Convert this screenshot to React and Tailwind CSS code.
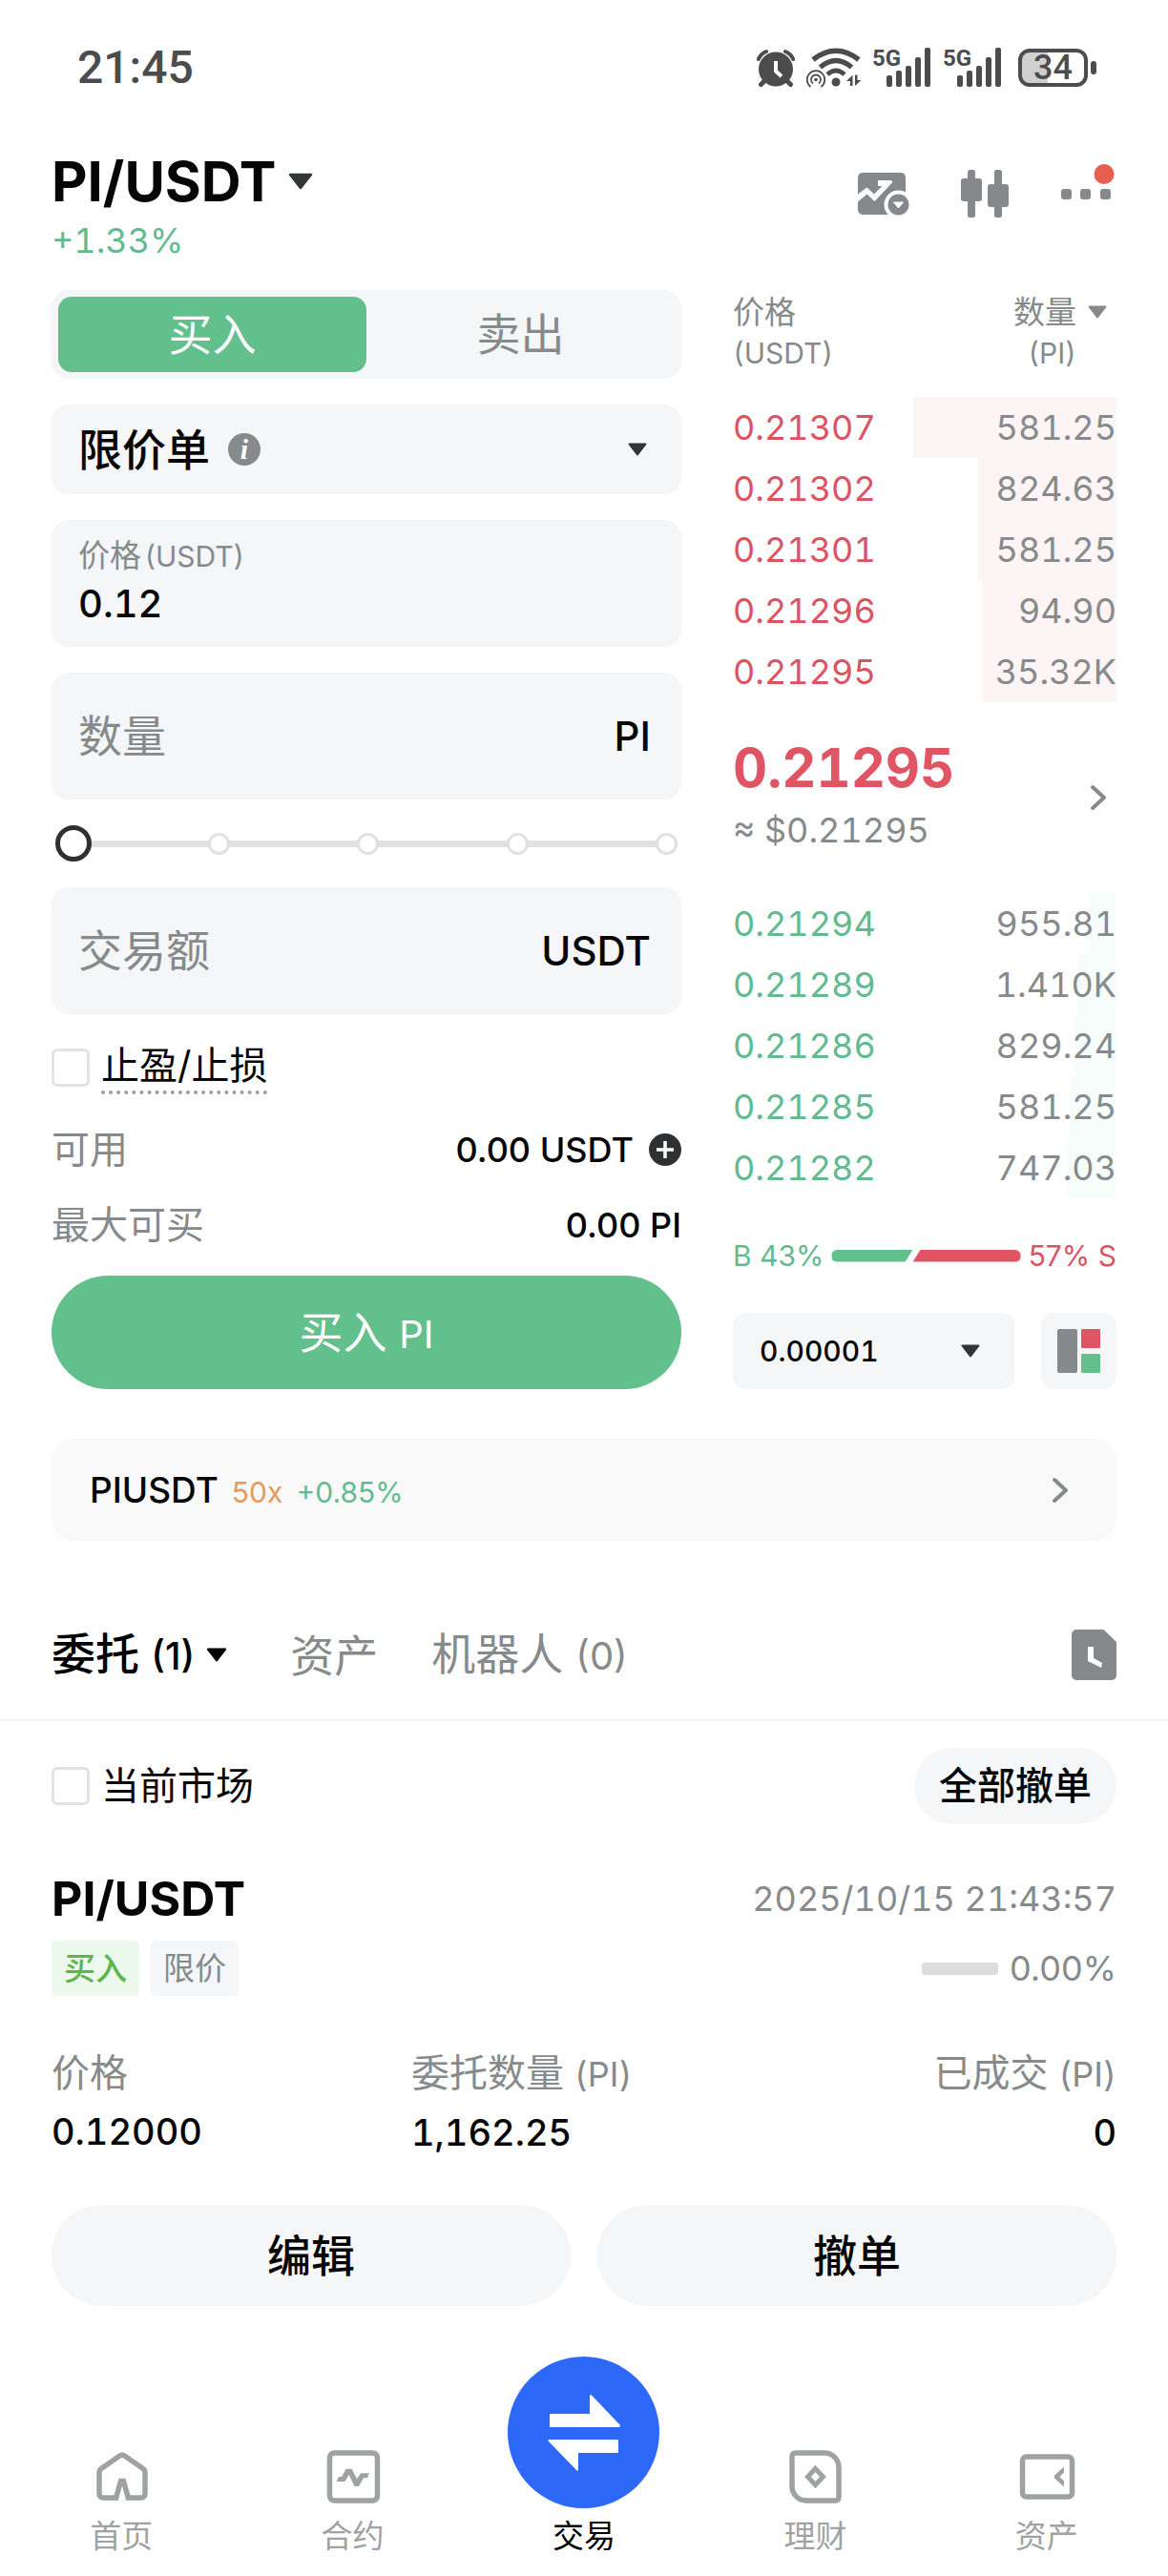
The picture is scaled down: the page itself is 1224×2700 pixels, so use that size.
import { useState } from "react";

const asks = [
  { price: "0.21307", amount: "581.25", depth: 53 },
  { price: "0.21302", amount: "824.63", depth: 36 },
  { price: "0.21301", amount: "581.25", depth: 36 },
  { price: "0.21296", amount: "94.90", depth: 35 },
  { price: "0.21295", amount: "35.32K", depth: 35 },
];

const bids = [
  { price: "0.21294", amount: "955.81", depth: 7 },
  { price: "0.21289", amount: "1.410K", depth: 10 },
  { price: "0.21286", amount: "829.24", depth: 11 },
  { price: "0.21285", amount: "581.25", depth: 12 },
  { price: "0.21282", amount: "747.03", depth: 13 },
];

const ratio = { buy: 43, sell: 57 };

const Caret = ({ className = "" }) => (
  <svg viewBox="0 0 20 14" className={`shrink-0 ${className}`} fill="currentColor" stroke="currentColor" strokeWidth="2" strokeLinejoin="round">
    <path d="M1.5 1.5h17L10 12.5z" />
  </svg>
);

const Chevron = () => (
  <svg viewBox="0 0 18 28" className="h-7 w-[18px] shrink-0 text-[#878a8b]" fill="none" stroke="currentColor" strokeWidth="4" strokeLinecap="round" strokeLinejoin="round">
    <path d="M3 3l12 11L3 25" />
  </svg>
);

/* STATUS BAR */
const Signal = () => (
  <svg viewBox="0 0 62 42" className="h-[42px] w-[62px] overflow-visible" fill="currentColor">
    <text x="-1" y="19" fontSize="24" fontWeight="700" fontFamily="Roboto, sans-serif">5G</text>
    <rect x="14" y="29" width="6" height="12" rx="2" />
    <rect x="24" y="24" width="6" height="17" rx="2" />
    <rect x="34" y="19" width="6" height="22" rx="2" />
    <rect x="44" y="10" width="6" height="31" rx="2" />
    <rect x="54" y="0" width="6" height="41" rx="2" />
  </svg>
);

const StatusBar = () => (
  <div className="flex items-center justify-between pt-[42px] pr-[75px] pl-[81px] text-[#4c4c4c]">
    <span className="font-['Roboto',sans-serif] text-[48px] leading-[58px] font-medium">21:45</span>

    <div className="flex items-center gap-3">
      <svg viewBox="0 0 40 41" className="h-[41px] w-10" fill="none" stroke="currentColor" strokeLinecap="round">
        <circle cx="20" cy="21.5" r="18" fill="currentColor" stroke="none" />
        <path d="M1.8 11A15 15 0 0 1 10 3" strokeWidth="4" />
        <path d="M38.2 11A15 15 0 0 0 30 3" strokeWidth="4" />
        <path d="M4.5 37.5l5-5M35.5 37.5l-5-5" strokeWidth="5" />
        <path d="M20 13v10.5l6 5.5" stroke="#fff" strokeWidth="4" strokeLinecap="butt" />
      </svg>

      <svg viewBox="0 0 58 42" className="h-[42px] w-[58px]" fill="none" stroke="currentColor">
        <path d="M7 12.5Q31-6 55 12.5" strokeWidth="5.5" />
        <path d="M14.5 20.5Q31 6.5 47.5 20.5" strokeWidth="5.5" />
        <path d="M22 28Q31 20 40 28" strokeWidth="5" />
        <circle cx="31" cy="36" r="4.5" fill="currentColor" stroke="none" />
        <circle cx="10" cy="33.5" r="1.8" fill="currentColor" stroke="none" />
        <path d="M7 37.5a5 5 0 1 1 6 0M4.5 41a9.3 9.3 0 1 1 11 0" strokeWidth="1.8" />
        <path d="M42 35l6.5-6.5V40H46v-5zM51 28.5h2.5V34h4L51 40z" fill="currentColor" stroke="none" />
      </svg>

      <Signal />
      <Signal />

      <div className="ml-1 flex items-center gap-[3px]">
        <div className="grid h-10 w-[73px] place-items-center rounded-[12px] border-4 border-current bg-linear-to-r from-[#cfcfcf] from-42% to-white to-42%">
          <span className="font-['Roboto',sans-serif] text-[36px] leading-8 font-medium">34</span>
        </div>
        <div className="h-[14px] w-[6px] rounded-[3px] bg-current" />
      </div>
    </div>
  </div>
);

/* PAIR HEADER */
const PairHeader = () => (
  <header className="flex items-start justify-between px-[54px] pt-[61px]">
    <div>
      <button type="button" className="flex items-center gap-3 text-[58px] leading-[58px] font-bold">
        PI/USDT
        <Caret className="h-[18px] w-[26px] text-[#333537]" />
      </button>
      <p className="mt-[13px] text-[36px] leading-10 text-[#62bb90] tabular-nums">+1.33%</p>
    </div>

    <div className="flex gap-[47px] pt-[9px] text-[#85898b]">
      <button type="button" aria-label="K线图">
        <svg viewBox="0 0 60 60" className="size-[60px]" fill="currentColor">
          <rect x="3" y="11" width="50" height="44" rx="5" />
          <path d="M3 33.5l9.5-7 7.5 7 8.5-8.500H24v-6h13q3 .5 2 2.500L20.500 41l-8-7.500L3 41.500z" fill="#fff" />
          <circle cx="45.5" cy="44.5" r="15" fill="#fff" />
          <circle cx="45.5" cy="44.5" r="11" />
          <path d="M40.5 42h10l-5 6z" fill="#fff" stroke="#fff" strokeLinejoin="round" />
        </svg>
      </button>
      <button type="button" aria-label="蜡烛图">
        <svg viewBox="0 0 60 60" className="size-[60px]" fill="currentColor">
          <rect x="11" y="8" width="8" height="50" rx="2.5" />
          <rect x="4" y="17" width="22" height="24" rx="3" />
          <rect x="39" y="8" width="8" height="50" rx="2.5" />
          <rect x="32" y="23" width="22" height="24" rx="3" />
        </svg>
      </button>
      <button type="button" aria-label="更多">
        <svg viewBox="0 0 60 60" className="size-[60px]" fill="currentColor">
          <rect x="2" y="28" width="11" height="11" rx="3" />
          <rect x="22" y="28" width="11" height="11" rx="3" />
          <rect x="43" y="28" width="11" height="11" rx="3" />
          <circle cx="47" cy="12.5" r="10.5" fill="#e65f51" />
        </svg>
      </button>
    </div>
  </header>
);

/* ORDER FORM */
const OrderForm = () => {
  const [side, setSide] = useState("buy");
  const [price, setPrice] = useState("0.12");
  const [percent, setPercent] = useState(0);

  return (
    <form className="flex flex-col gap-[27px]" onSubmit={(e) => e.preventDefault()}>
      <div className="grid h-[93px] grid-cols-2 rounded-[18px] bg-[#f4f6f7] p-[7px] text-[46px]">
        <button
          type="button"
          onClick={() => setSide("buy")}
          className={side === "buy" ? "rounded-[14px] bg-[#62c08c] text-white" : "text-[#878a8b]"}
        >
          买入
        </button>
        <button
          type="button"
          onClick={() => setSide("sell")}
          className={side === "sell" ? "rounded-[14px] bg-[#db5463] text-white" : "text-[#878a8b]"}
        >
          卖出
        </button>
      </div>

      <div className="grid h-[94px] items-center rounded-[18px] bg-[#f4f6f7]">
        <select aria-label="订单类型" className="col-start-1 row-start-1 h-full w-full appearance-none bg-transparent pl-7 text-[46px] font-medium">
          <option>限价单</option>
        </select>
        <div className="pointer-events-none col-start-1 row-start-1 flex items-center justify-between pr-9 pl-[185px]">
          <span className="flex size-[34px] items-center justify-center rounded-full bg-[#878a8b] font-['Liberation_Serif',serif] text-[30px] leading-none font-bold text-white italic">
            i
          </span>
          <Caret className="h-[14px] w-5 text-[#333537]" />
        </div>
      </div>

      <div className="h-[133px] rounded-[18px] bg-[#f4f6f7] px-7 pt-4">
        <label htmlFor="price" className="flex items-baseline gap-1 text-[33px] leading-[42px] text-[#878a8b]">
          价格 <span className="text-[30px]">(USDT)</span>
        </label>
        <input
          id="price"
          value={price}
          onChange={(e) => setPrice(e.target.value)}
          className="block h-[58px] w-full bg-transparent text-[40px] font-medium tabular-nums outline-none"
        />
      </div>

      <label className="flex h-[133px] items-center rounded-[18px] bg-[#f4f6f7] pr-8 pl-7">
        <input aria-label="数量" placeholder="数量" className="w-full min-w-0 flex-1 bg-transparent text-[46px] outline-none placeholder:text-[#878a8b]" />
        <span className="text-[42px] font-medium">PI</span>
      </label>

      <div className="mx-1 grid h-[38px] items-center">
        <div className="col-start-1 row-start-1 mx-3 h-[7px] bg-[#e0e1e1]" />
        <div className="col-start-1 row-start-1 flex justify-between">
          <span className="w-[26px]" />
          {[25, 50, 75, 100].map((step) => (
            <span key={step} className="size-[23px] rounded-full border-3 border-[#e0e1e1] bg-white" />
          ))}
        </div>
        <input
          type="range"
          aria-label="数量百分比"
          min="0"
          max="100"
          value={percent}
          onChange={(e) => setPercent(Number(e.target.value))}
          className="col-start-1 row-start-1 h-[38px] w-full appearance-none bg-transparent [&::-webkit-slider-thumb]:size-[38px] [&::-webkit-slider-thumb]:appearance-none [&::-webkit-slider-thumb]:rounded-full [&::-webkit-slider-thumb]:border-5 [&::-webkit-slider-thumb]:border-solid [&::-webkit-slider-thumb]:border-[#2e3032] [&::-webkit-slider-thumb]:bg-white"
        />
      </div>

      <label className="flex h-[133px] items-center rounded-[18px] bg-[#f4f6f7] pr-8 pl-7">
        <input aria-label="交易额" placeholder="交易额" className="w-full min-w-0 flex-1 bg-transparent text-[46px] outline-none placeholder:text-[#878a8b]" />
        <span className="text-[42px] font-medium">USDT</span>
      </label>

      <label className="flex items-center gap-3 self-start">
        <input type="checkbox" className="size-10 appearance-none rounded-[6px] border-3 border-[#e2e3e3] checked:bg-[#62c08c]" />
        <span className="border-b-4 border-dotted border-[#9a9c9d] text-[40px] leading-[53px]">止盈/止损</span>
      </label>

      <dl className="flex flex-col gap-[27px] pt-[5px] leading-[52px]">
        <div className="flex items-center justify-between">
          <dt className="text-[40px] text-[#878a8b]">可用</dt>
          <dd className="flex items-center gap-4 text-[36px] font-medium">
            0.00 USDT
            <button type="button" aria-label="充值">
              <svg viewBox="0 0 34 34" className="size-[34px]">
                <circle cx="17" cy="17" r="17" fill="#2e3032" />
                <path d="M17 8v18M8 17h18" stroke="#fff" strokeWidth="3.5" />
              </svg>
            </button>
          </dd>
        </div>
        <div className="flex items-center justify-between">
          <dt className="text-[40px] text-[#878a8b]">最大可买</dt>
          <dd className="text-[36px] font-medium">0.00 PI</dd>
        </div>
      </dl>

      <button type="submit" className="h-[119px] rounded-full bg-[#62c08c] text-[46px] text-white">
        买入 <span className="text-[40px]">PI</span>
      </button>
    </form>
  );
};

/* ORDER BOOK */
const OrderBook = () => (
  <section>
    <table className="w-full text-[36px] tabular-nums">
      <thead className="text-[33px] leading-[43px] text-[#878a8b]">
        <tr>
          <th className="pt-[2px] pb-6 text-left font-normal">
            价格
            <span className="block text-[30px]">(USDT)</span>
          </th>
          <th className="flex justify-end gap-3 pt-[2px] pr-[10px] pb-6 text-right font-normal">
            <div>
              数量
              <span className="block text-[30px]">(PI)</span>
            </div>
            <Caret className="mt-[14px] h-[14px] w-5" />
          </th>
        </tr>
      </thead>
      <tbody>
        {asks.map((row) => (
          <tr
            key={row.price}
            className="h-16 bg-linear-to-r from-[#fcf4f5] to-[#fcf4f5] bg-right bg-no-repeat"
            style={{ backgroundSize: `${row.depth}% 100%` }}
          >
            <td className="text-[#db5463]">{row.price}</td>
            <td className="text-right text-[#878a8b]">{row.amount}</td>
          </tr>
        ))}
      </tbody>
      <tbody>
        <tr className="h-[200px]">
          <td colSpan={2}>
            <a href="#price" className="flex items-center justify-between pr-[10px]">
              <span>
                <span className="block text-[56px] leading-[60px] font-bold text-[#e05563]">0.21295</span>
                <span className="mt-2 block leading-[54px] text-[#878a8b]">≈ $0.21295</span>
              </span>
              <Chevron />
            </a>
          </td>
        </tr>
      </tbody>
      <tbody>
        {bids.map((row) => (
          <tr
            key={row.price}
            className="h-16 bg-linear-to-r from-[#f6fdfa] to-[#f6fdfa] bg-right bg-no-repeat"
            style={{ backgroundSize: `${row.depth}% 100%` }}
          >
            <td className="text-[#62bb90]">{row.price}</td>
            <td className="text-right text-[#878a8b]">{row.amount}</td>
          </tr>
        ))}
      </tbody>
    </table>

    <div className="mt-10 flex items-center gap-2 text-[30px] leading-10">
      <span className="text-[#62bb90]">B {ratio.buy}%</span>
      <div className="flex h-[13px] flex-1">
        <div
          className="rounded-l-full bg-[#62c08c] [clip-path:polygon(0_0,100%_0,calc(100%-8px)_100%,0_100%)]"
          style={{ width: `${ratio.buy}%` }}
        />
        <div
          className="rounded-r-full bg-[#e05563] [clip-path:polygon(8px_0,100%_0,100%_100%,0_100%)]"
          style={{ width: `${ratio.sell}%` }}
        />
      </div>
      <span className="text-[#db5463]">{ratio.sell}% S</span>
    </div>

    <div className="mt-10 flex h-20 gap-7">
      <div className="grid flex-1 items-center rounded-[14px] bg-[#f4f6f7]">
        <select aria-label="深度精度" className="col-start-1 row-start-1 h-full w-full appearance-none bg-transparent pl-7 text-[30px] font-medium tabular-nums">
          <option>0.00001</option>
        </select>
        <Caret className="pointer-events-none col-start-1 row-start-1 mr-9 h-[14px] w-5 justify-self-end text-[#333537]" />
      </div>
      <button type="button" aria-label="盘口布局" className="flex w-[79px] items-center justify-center rounded-[14px] bg-[#f4f6f7]">
        <svg viewBox="0 0 46 46" className="size-[46px]">
          <rect width="21" height="46" rx="2" fill="#85898b" />
          <rect x="25" width="20" height="20" rx="1" fill="#e05563" />
          <rect x="25" y="26" width="20" height="20" rx="1" fill="#62c08c" />
        </svg>
      </button>
    </div>
  </section>
);

/* OPEN ORDERS */
const OpenOrders = () => (
  <section>
    <div className="flex items-center justify-between border-b-2 border-[#f2f2f3] px-[54px] pt-[88px] pb-9 text-[46px] leading-[60px] text-[#878a8b]">
      <nav className="flex items-center">
        <button type="button" className="flex items-center gap-3 font-medium text-black">
          <span>
            委托 <span className="text-[40px]">(1)</span>
          </span>
          <Caret className="h-[15px] w-[22px]" />
        </button>
        <button type="button" className="ml-[66px]">资产</button>
        <button type="button" className="ml-14">
          机器人 <span className="text-[40px]">(0)</span>
        </button>
      </nav>
      <button type="button" aria-label="历史委托">
        <svg viewBox="0 0 47 53" className="h-[53px] w-[47px]">
          <path d="M5 0h28.5L47 13v35a5 5 0 0 1-5 5H5a5 5 0 0 1-5-5V5a5 5 0 0 1 5-5z" fill="#85898b" />
          <path d="M17 18h6v12l9 5-1 5-14-7z" fill="#fff" />
        </svg>
      </button>
    </div>

    <div className="px-[54px]">
      <div className="flex items-center justify-between pt-7">
        <label className="flex items-center gap-3 text-[40px]">
          <input type="checkbox" className="size-10 appearance-none rounded-[6px] border-3 border-[#e2e3e3] checked:bg-[#62c08c]" />
          当前市场
        </label>
        <button type="button" className="h-20 rounded-full bg-[#f4f6f7] px-[26px] text-[40px] font-medium">
          全部撤单
        </button>
      </div>

      <div className="mt-12 flex items-center justify-between leading-[60px]">
        <h2 className="text-[50px] font-bold">PI/USDT</h2>
        <time className="text-[36px] text-[#878a8b] tabular-nums">2025/10/15 21:43:57</time>
      </div>

      <div className="mt-[14px] flex items-center gap-3 text-[33px] leading-[58px] text-[#878a8b]">
        <span className="rounded-[6px] bg-[#edf9ec] px-[13px] font-medium text-[#5fb54c]">买入</span>
        <span className="rounded-[6px] bg-[#f4f6f7] px-[13px]">限价</span>
        <div className="ml-auto flex items-center gap-3">
          <span className="h-[13px] w-20 rounded-[3px] bg-[#dcdede]" />
          <span className="text-[36px]">0.00%</span>
        </div>
      </div>

      <dl className="mt-14 grid grid-cols-[377fr_400fr_339fr] text-[38px] leading-[50px] font-medium tabular-nums">
        <div>
          <dt className="text-[40px] font-normal text-[#878a8b]">价格</dt>
          <dd className="mt-[11px]">0.12000</dd>
        </div>
        <div>
          <dt className="text-[40px] font-normal text-[#878a8b]">
            委托数量 <span className="text-[36px]">(PI)</span>
          </dt>
          <dd className="mt-[11px]">1,162.25</dd>
        </div>
        <div className="text-right">
          <dt className="text-[40px] font-normal text-[#878a8b]">
            已成交 <span className="text-[36px]">(PI)</span>
          </dt>
          <dd className="mt-[11px]">0</dd>
        </div>
      </dl>

      <div className="mt-[51px] grid grid-cols-2 gap-7">
        <button type="button" className="h-[106px] rounded-full bg-[#f4f6f7] text-[46px] font-medium">编辑</button>
        <button type="button" className="h-[106px] rounded-full bg-[#f4f6f7] text-[46px] font-medium">撤单</button>
      </div>
    </div>
  </section>
);

/* BOTTOM NAV */
const BottomNav = () => (
  <nav className="mt-[53px] grid grid-cols-5 items-end px-[6px] pb-5 text-[33px] leading-10 text-[#9fa2a3]">
    <a href="#home" className="flex flex-col items-center gap-3">
      <svg viewBox="0 0 60 60" className="size-[60px]" fill="none" stroke="currentColor" strokeWidth="5.5">
        <path d="M26 52H11a4 4 0 0 1-4-4V26q0-3 2-4.5L28.5 8q2.5-1.5 5 0L53 21.5q2 1.500 2 4.500v22a4 4 0 0 1-4 4H36" />
        <path d="M24 54.5l5.5-20h3l5.5 20" />
      </svg>
      首页
    </a>
    <a href="#futures" className="flex flex-col items-center gap-3">
      <svg viewBox="0 0 60 60" className="size-[60px]">
        <rect x="5.5" y="5" width="50" height="50" rx="5" fill="none" stroke="currentColor" strokeWidth="5.5" />
        <path d="M12.5 35l2.5-5h3l4.6-8.3h6.2L34 32.3l4-6h9l-2 5h-4L36 40h-4.5L25.7 28l-4.3 7z" fill="currentColor" />
      </svg>
      合约
    </a>
    <a href="#trade" className="flex flex-col items-center gap-[9px] text-black">
      <span className="flex size-[159px] items-center justify-center rounded-full bg-[#2d68f8]">
        <svg viewBox="42 36 80 86" className="h-[86px] w-20" fill="#fff" stroke="#fff" strokeWidth="2" strokeLinejoin="round">
          <path d="M47 60h42V40l30 31.5-.5.5H47z" />
          <path d="M117 87H45.5L75 117.5V99h42z" />
        </svg>
      </span>
      交易
    </a>
    <a href="#earn" className="flex flex-col items-center gap-3">
      <svg viewBox="0 0 60 60" className="size-[60px]" fill="none" stroke="currentColor" strokeWidth="5.5">
        <path d="M9.5 5H40a15 15 0 0 1 15 15v32a3 3 0 0 1-3 3H21A15 15 0 0 1 6 40V8.5A3.5 3.5 0 0 1 9.5 5z" />
        <path d="M30.5 21.5l8 8.5-8 8.5-8-8.5z" strokeWidth="5" />
      </svg>
      理财
    </a>
    <a href="#assets" className="flex flex-col items-center gap-3">
      <svg viewBox="0 0 60 60" className="size-[60px]">
        <rect x="4.5" y="9" width="52" height="42" rx="4" fill="none" stroke="currentColor" strokeWidth="5.5" />
        <path d="M48 19.5v6L43.5 30l4.5 4.5v6L38 31.5v-3z" fill="currentColor" />
      </svg>
      资产
    </a>
  </nav>
);

const App = () => {
  return (
    <div lang="zh-CN" className="min-h-screen bg-white font-['Inter','Noto_Sans_CJK_SC',sans-serif] text-[#060606]">
      <StatusBar />
      <PairHeader />

      <main>
        <div className="grid grid-cols-[minmax(0,110fr)_minmax(0,67fr)] gap-[54px] px-[54px] pt-8">
          <OrderForm />
          <OrderBook />
        </div>

        <div className="mt-[52px] px-[54px]">
          <a href="#perp" className="flex h-[107px] items-center justify-between rounded-[24px] bg-[#f9f9f9] pr-[50px] pl-10">
            <span className="flex items-baseline gap-[14px] text-[30px]">
              <span className="text-[37px] font-medium">PIUSDT</span>
              <span className="text-[#e59a5d]">50x</span>
              <span className="text-[#62bb90]">+0.85%</span>
            </span>
            <Chevron />
          </a>
        </div>

        <OpenOrders />
      </main>

      <BottomNav />
    </div>
  );
};

export default App;
